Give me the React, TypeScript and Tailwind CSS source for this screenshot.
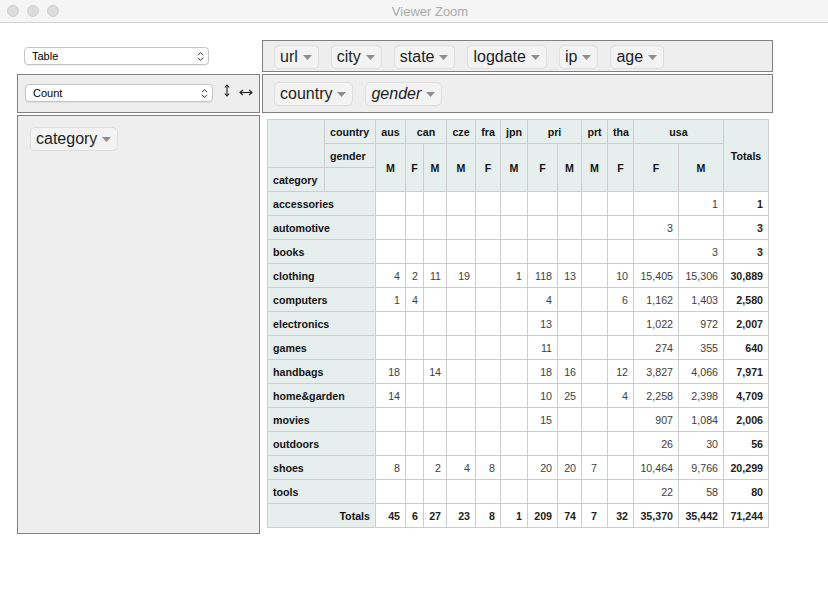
import React from "react";

const colWidths = [57, 51, 30, 18, 23, 29, 25, 27, 30, 24, 26, 26, 45, 45, 45];
const colWClasses = [
  "w-[57px]", "w-[51px]", "w-[30px]", "w-[18px]", "w-[23px]", "w-[29px]", "w-[25px]",
  "w-[27px]", "w-[30px]", "w-[24px]", "w-[26px]", "w-[26px]", "w-[45px]", "w-[45px]", "w-[45px]",
];

const countries: [string, number][] = [
  ["aus", 1], ["can", 2], ["cze", 1], ["fra", 1], ["jpn", 1], ["pri", 2], ["prt", 1], ["tha", 1], ["usa", 2],
];
const genders = ["M", "F", "M", "M", "F", "M", "F", "M", "M", "F", "F", "M"];

const rows: [string, string[]][] = [
  ["accessories", ["", "", "", "", "", "", "", "", "", "", "", "1", "1"]],
  ["automotive", ["", "", "", "", "", "", "", "", "", "", "3", "", "3"]],
  ["books", ["", "", "", "", "", "", "", "", "", "", "", "3", "3"]],
  ["clothing", ["4", "2", "11", "19", "", "1", "118", "13", "", "10", "15,405", "15,306", "30,889"]],
  ["computers", ["1", "4", "", "", "", "", "4", "", "", "6", "1,162", "1,403", "2,580"]],
  ["electronics", ["", "", "", "", "", "", "13", "", "", "", "1,022", "972", "2,007"]],
  ["games", ["", "", "", "", "", "", "11", "", "", "", "274", "355", "640"]],
  ["handbags", ["18", "", "14", "", "", "", "18", "16", "", "12", "3,827", "4,066", "7,971"]],
  ["home&garden", ["14", "", "", "", "", "", "10", "25", "", "4", "2,258", "2,398", "4,709"]],
  ["movies", ["", "", "", "", "", "", "15", "", "", "", "907", "1,084", "2,006"]],
  ["outdoors", ["", "", "", "", "", "", "", "", "", "", "26", "30", "56"]],
  ["shoes", ["8", "", "2", "4", "8", "", "20", "20", "7", "", "10,464", "9,766", "20,299"]],
  ["tools", ["", "", "", "", "", "", "", "", "", "", "22", "58", "80"]],
];
const totals = ["45", "6", "27", "23", "8", "1", "209", "74", "7", "32", "35,370", "35,442", "71,244"];

function Triangle() {
  return (
    <svg width="9" height="5" viewBox="0 0 9 5" className="shrink-0">
      <path d="M0 0 L9 0 L4.5 5 Z" fill="#8e8e8e" />
    </svg>
  );
}

function Pill({ label, italic }: { label: string; italic?: boolean }) {
  return (
    <div className="flex items-center h-[24px] pl-[5px] pr-[6px] gap-[5px] bg-[#f3f3f3] border border-[#dedede] rounded-[5px] text-[16px] leading-[18px] text-[#1e1e1e] whitespace-nowrap">
      <span className={italic ? "italic" : ""}>{label}</span>
      <Triangle />
    </div>
  );
}

function Chevrons() {
  return (
    <svg width="7" height="11" viewBox="0 0 7 11" className="shrink-0">
      <path d="M1 4.2 L3.5 1.5 L6 4.2" fill="none" stroke="#3a3a3a" strokeWidth="1" />
      <path d="M1 6.8 L3.5 9.5 L6 6.8" fill="none" stroke="#3a3a3a" strokeWidth="1" />
    </svg>
  );
}

function FakeSelect({ label, w }: { label: string; w: string }) {
  return (
    <div
      className={`${w} h-[18px] flex items-center justify-between bg-white border border-[#c4c4c4] rounded-[4px] pl-[7px] pr-[4px] text-[11px] text-black shadow-[0_1px_0_rgba(0,0,0,0.06)]`}
    >
      <span>{label}</span>
      <Chevrons />
    </div>
  );
}

function VArrow() {
  return (
    <svg width="6" height="13" viewBox="0 0 6 13" className="shrink-0">
      <path d="M3 1 L3 12" stroke="#222" strokeWidth="1.1" />
      <path d="M0.8 3.5 L3 1 L5.2 3.5" fill="none" stroke="#222" strokeWidth="1.1" />
      <path d="M0.8 9.5 L3 12 L5.2 9.5" fill="none" stroke="#222" strokeWidth="1.1" />
    </svg>
  );
}

function HArrow() {
  return (
    <svg width="14" height="7" viewBox="0 0 14 7" className="shrink-0">
      <path d="M1 3.5 L13 3.5" stroke="#222" strokeWidth="1.1" />
      <path d="M3.8 1 L1 3.5 L3.8 6" fill="none" stroke="#222" strokeWidth="1.1" />
      <path d="M10.2 1 L13 3.5 L10.2 6" fill="none" stroke="#222" strokeWidth="1.1" />
    </svg>
  );
}

const th = "bg-[#e6eeee] border border-[#cdcdcd] px-[5px] py-0 font-bold text-[#141414] align-middle";
const td = "bg-white border border-[#cdcdcd] px-[5px] py-0 text-right text-[#3d3d3d] align-middle";

export default function App() {
  return (
    <div className="w-[828px] h-[595px] bg-white font-['Liberation_Sans',Arial,Helvetica,sans-serif] overflow-hidden">
      {/* title bar */}
      <div className="relative h-[23px] bg-[#f5f5f5] border-b border-[#d2d2d2] flex items-center">
        <div className="flex gap-[8px] pl-[7px]">
          <div className="w-[12px] h-[12px] rounded-full bg-[#dcdcdc] border border-[#d0d0d0]" />
          <div className="w-[12px] h-[12px] rounded-full bg-[#dcdcdc] border border-[#d0d0d0]" />
          <div className="w-[12px] h-[12px] rounded-full bg-[#dcdcdc] border border-[#d0d0d0]" />
        </div>
        <div className="flex-1 flex justify-center pr-[27px] pt-[2px] text-[13px] text-[#ababab]">Viewer Zoom</div>
      </div>

      {/* pivot ui */}
      <div className="pl-[17px] pt-[17px]">
        <div className="grid grid-cols-[243px_511px] grid-rows-[32px_39px_auto] gap-[2px]">
          {/* renderer */}
          <div className="pl-[7px] pt-[7px]">
            <FakeSelect label="Table" w="w-[185px]" />
          </div>
          {/* unused attrs */}
          <div className="bg-[#eeeeee] border border-[#808080] pl-[11px] pt-[4px] flex gap-[12px] items-start">
            <Pill label="url" />
            <Pill label="city" />
            <Pill label="state" />
            <Pill label="logdate" />
            <Pill label="ip" />
            <Pill label="age" />
          </div>
          {/* vals */}
          <div className="bg-[#eeeeee] border border-[#808080] pl-[7px] pt-[9px] flex items-start">
            <FakeSelect label="Count" w="w-[188px]" />
            <div className="ml-[11px] mt-[0px]">
              <VArrow />
            </div>
            <div className="ml-[9px] mt-[5px]">
              <HArrow />
            </div>
          </div>
          {/* cols */}
          <div className="bg-[#eeeeee] border border-[#808080] pl-[11px] pt-[7px] flex gap-[12px] items-start">
            <Pill label="country" />
            <Pill label="gender" italic />
          </div>
          {/* rows */}
          <div className="bg-[#eeeeee] border border-[#808080] pl-[12px] pt-[11px] h-[419px] flex items-start">
            <Pill label="category" />
          </div>
          {/* output */}
          <div className="pl-[5px] pt-[4px]">
            <table className="table-fixed border-collapse w-[501px] text-[10.67px] leading-[12px]">
              <colgroup>
                {colWidths.map((_, i) => (
                  <col key={i} className={colWClasses[i]} />
                ))}
              </colgroup>
              <thead>
                <tr className="h-[24px]">
                  <th className={th} rowSpan={2}></th>
                  <th className={`${th} text-left`}>country</th>
                  {countries.map(([c, span]) => (
                    <th key={c} className={`${th} text-center`} colSpan={span}>
                      {c}
                    </th>
                  ))}
                  <th className={`${th} text-center`} rowSpan={3}>
                    Totals
                  </th>
                </tr>
                <tr className="h-[24px]">
                  <th className={`${th} text-left`}>gender</th>
                  {genders.map((g, i) => (
                    <th key={i} className={`${th} text-center`} rowSpan={2}>
                      {g}
                    </th>
                  ))}
                </tr>
                <tr className="h-[24px]">
                  <th className={`${th} text-left`}>category</th>
                  <th className={th}></th>
                </tr>
              </thead>
              <tbody>
                {rows.map(([name, vals]) => (
                  <tr key={name} className="h-[24px]">
                    <th className={`${th} text-left`} colSpan={2}>
                      {name}
                    </th>
                    {vals.map((v, i) => (
                      <td
                        key={i}
                        className={`${td} ${i === 8 ? "pr-[10px]" : ""} ${i === 12 ? "font-bold text-[#222]" : ""}`}
                      >
                        {v}
                      </td>
                    ))}
                  </tr>
                ))}
                <tr className="h-[24px]">
                  <th className={`${th} text-right`} colSpan={2}>
                    Totals
                  </th>
                  {totals.map((v, i) => (
                    <td key={i} className={`${td} font-bold text-[#222] ${i === 8 ? "pr-[10px]" : ""}`}>
                      {v}
                    </td>
                  ))}
                </tr>
              </tbody>
            </table>
          </div>
        </div>
      </div>
    </div>
  );
}
